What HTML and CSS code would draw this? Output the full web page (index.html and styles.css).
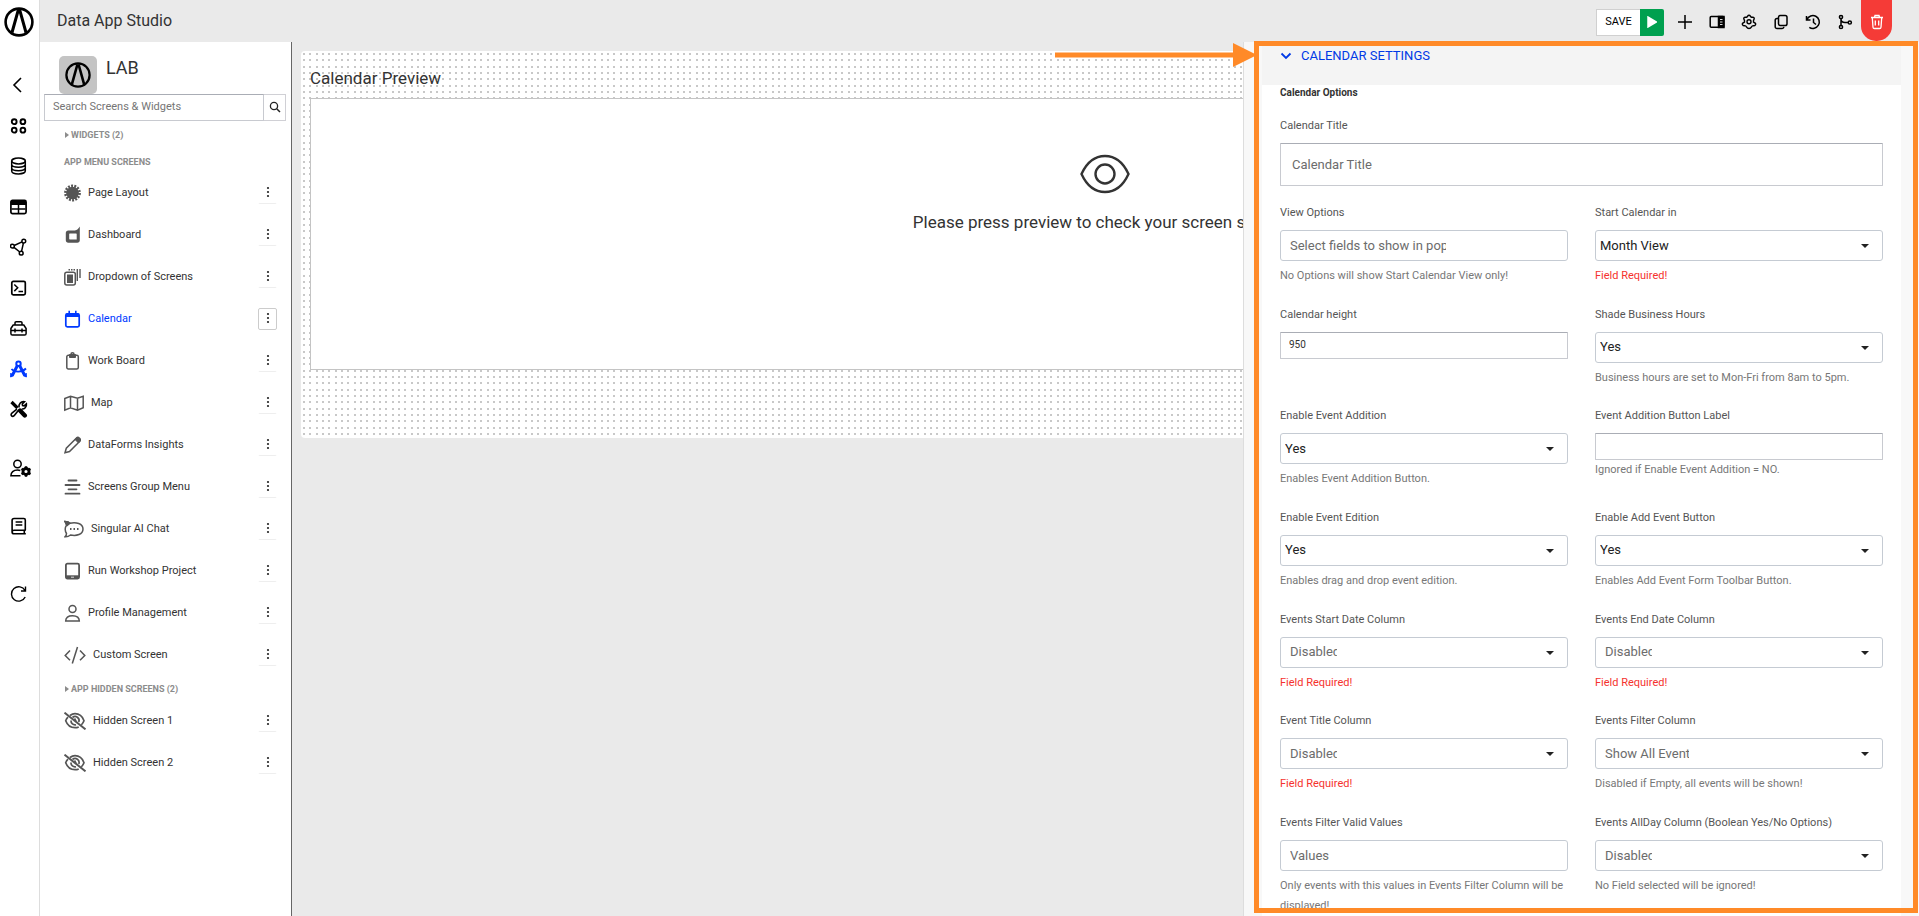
FILE: index.html
```html
<!DOCTYPE html>
<html lang="en">
<head>
<meta charset="utf-8">
<title>Data App Studio</title>
<link rel="stylesheet" href="styles.css">
</head>
<body>
<svg class="defs" aria-hidden="true">
  <symbol id="logo" viewBox="0 0 30 30"><circle cx="15" cy="15" r="13.4" fill="none" stroke="#000" stroke-width="2.6"/><path d="M8 25.500 14 4h2l6 21.500M15 5" fill="none" stroke="#000" stroke-width="3"/></symbol>
  <symbol id="kebab" viewBox="0 0 4 12"><circle cx="2" cy="2" r="1.100"/><circle cx="2" cy="6" r="1.100"/><circle cx="2" cy="10" r="1.100"/></symbol>
  <symbol id="eye-off" viewBox="0 0 22 18"><g fill="none" stroke="currentColor" stroke-width="1.700"><path d="M6 3.500C8 2 9.500 1.700 11 1.700c4.500 0 7.500 3 9 7-.6 1.600-1.500 3-2.700 4.100M4 5.200C3 6.200 2.200 7.400 1.700 8.700c1.500 4 4.800 7 9.300 7 1.300 0 2.600-.3 3.700-.8"/><path d="M8.500 5.500a4 4 0 0 1 6.300 4.500M7 8.500a4 4 0 0 0 5 4.200"/><path d="M10.500 6.500 12 9.500"/><path d="M.5.700 21.500 17.300" stroke-width="2"/></g></symbol>
</svg>
<div class="app">
  <aside class="rail">
    <a class="rail-logo" href="#" aria-label="Home"><svg width="30" height="30"><use href="#logo"/></svg></a>
    <nav class="rail-nav" aria-label="Main">
      <button class="rail-btn" aria-label="Back"><svg width="18" height="18" viewBox="0 0 18 18"><path d="m11 2-7 7 7 7" stroke-width="1.600"/></svg></button>
      <button class="rail-btn" aria-label="Apps"><svg width="18" height="18" viewBox="0 0 18 18"><g stroke-width="1.900"><circle cx="4.200" cy="4.700" r="2.400"/><circle cx="12.900" cy="4.700" r="2.400"/><circle cx="4.200" cy="13.200" r="2.400"/><circle cx="12.900" cy="13.200" r="2.400"/></g></svg></button>
      <button class="rail-btn" aria-label="Database"><svg width="18" height="18" viewBox="0 0 18 18"><ellipse cx="8.500" cy="4" rx="6.800" ry="2.900"/><path d="M1.700 4v10c0 1.600 3 2.900 6.800 2.900s6.800-1.300 6.800-2.900V4M1.700 7.500c0 1.500 2.800 2.700 6.800 2.700s6.800-1.200 6.800-2.700M1.700 11c0 1.500 2.800 2.700 6.800 2.700s6.800-1.200 6.800-2.700"/></svg></button>
      <button class="rail-btn" aria-label="Tables"><svg width="18" height="18" viewBox="0 0 18 18"><rect x=".9" y="2.400" width="15.200" height="13.200" rx="1.600" stroke-width="1.700"/><path d="M1 5h15" stroke-width="4"/><path d="M8.500 6v10M1.500 11h14"/></svg></button>
      <button class="rail-btn" aria-label="Flows"><svg width="18" height="18" viewBox="0 0 18 18"><circle cx="2.400" cy="8.200" r="1.900"/><circle cx="13.800" cy="3.200" r="1.900"/><circle cx="11.200" cy="15.200" r="1.900"/><path d="m4.200 7.500 7.800-3.600M4 9.300l5.800 4.700M13.400 5.200l-1.800 8"/></svg></button>
      <button class="rail-btn" aria-label="Console"><svg width="18" height="18" viewBox="0 0 18 18"><rect x="1.800" y="2.300" width="13.500" height="13.500" rx="1.500" stroke-width="1.700"/><path d="m4.300 5.500 3.400 3.300-3.400 3.300M8.500 12.500H13"/></svg></button>
      <button class="rail-btn" aria-label="Toolbox"><svg width="18" height="18" viewBox="0 0 18 18"><path d="M.9 9.500 3.200 6h10.600l2.300 3.500v5c0 1-.6 1.600-1.500 1.600H2.400c-.9 0-1.500-.6-1.500-1.600zM5 6V3.800c0-.7.400-1.100 1.100-1.100h4.800c.7 0 1.100.4 1.100 1.100V6M.9 11.500h15.200M5 9.500v4M12 9.500v4"/></svg></button>
      <button class="rail-btn rail-btn--active" aria-label="Studio"><svg width="18" height="18" viewBox="0 0 18 18"><circle cx="8.500" cy="3.700" r="2.200" stroke-width="2"/><path d="M7.200 6 2.500 15M9.800 6l4.700 9" stroke-width="3"/><path d="M1.500 9c2.500 3 10 4 14.500-.5" stroke-width="1.800"/><path d="m.8 13-.2 4L4 15.500M16.200 13l.2 4-3.400-1.500" fill="currentColor" stroke-width="1"/></svg></button>
      <button class="rail-btn" aria-label="Tools"><svg width="18" height="18" viewBox="0 0 18 18"><path d="M1.500 2l6 6" stroke-width="3.200"/><path d="m10 10.500 4.800 5" stroke-width="4.400" stroke-linecap="round"/><path d="M8.500 10.200 4.300 15.600c-.8 1-2 1-2.700.3s-.7-1.900.3-2.700l5-4M9 7.500C8.500 4 11 1 14.500 1.700L12.300 4l.3 1.600 1.600.3L16.400 3.800c.5 3.200-2 5.600-4.700 5.200" stroke-width="1.600"/></svg></button>
    </nav>
    <button class="rail-btn rail-btn--users" aria-label="User settings"><svg width="22" height="18" viewBox="0 0 22 18"><circle cx="7.500" cy="5" r="3.700"/><path d="M10.500 16.700H.9c0-3.300 2.500-5.700 6.600-5.700 1 0 2 .2 2.800.5"/><circle cx="16" cy="12.500" r="3" stroke-width="2.800"/><path d="M16 7.300v2M16 15.700v2M11.500 9.900l1.700 1M18.700 14.100l1.800 1M11.500 15.100l1.700-1M18.700 10.900l1.800-1" stroke-width="2.400"/></svg></button>
    <button class="rail-btn rail-btn--docs" aria-label="Documentation"><svg width="18" height="18" viewBox="0 0 18 18"><path d="M15.800 13.200H4.100c-1.200 0-2 .8-2 1.800s.8 1.800 2 1.800h11.700M2.100 15V3.500c0-1.200.8-2 2-2h9.700c1 0 1.500.5 1.500 1.500v10M14.300 13.500v3M5.600 5h6.700M5.600 8h6.700" stroke-width="1.600"/></svg></button>
    <button class="rail-btn rail-btn--refresh" aria-label="Refresh"><svg width="18" height="18" viewBox="0 0 18 18"><path d="M15 5.500A7.200 7.200 0 1 0 15.200 12M15.500 1.500V6H11" stroke-width="1.400"/></svg></button>
  </aside>

  <div class="shell">
    <header class="topbar">
      <h1 class="topbar-title">Data App Studio</h1>
      <div class="topbar-tools">
        <button class="save-btn">SAVE</button>
        <button class="play-btn" aria-label="Preview"><svg width="10" height="12" viewBox="0 0 10 12"><path d="M1 1v10l8.500-5z" fill="#fff" stroke="#fff"/></svg></button>
        <button class="tool-btn" aria-label="Add"><svg width="16" height="16" viewBox="0 0 16 16"><path d="M8 1v14M1 8h14" stroke-width="1.500"/></svg></button>
        <button class="tool-btn" aria-label="Panel"><svg width="16" height="16" viewBox="0 0 16 16"><rect x="1.200" y="2.500" width="13.600" height="10.800" rx="1"/><path d="M9.500 2.500H15v11H9.500z" fill="#000"/><path d="M11 5.500h2.500M11 8h2.500M11 10.500h2.500" stroke="#ddd" stroke-width="1"/></svg></button>
        <button class="tool-btn" aria-label="Settings"><svg width="16" height="16" viewBox="0 0 16 16"><path d="M8 1.200c1.300 0 1.500 1.500 2.200 1.900.8.400 2.200-.4 2.900.7.700 1.200-.6 2-.6 2.900 0 1 0 .6 0 1.300l2 1.300c.3.400.3.900 0 1.400-.7 1.700-2.500.8-3.300 1.300-.8.500-.9 2.500-3.200 2.500s-2.400-2-3.200-2.500c-.8-.5-2.600.4-3.300-1.300-.3-.500-.3-1 0-1.400l2-1.300V6.700c0-.900-1.300-1.700-.6-2.900.7-1.100 2.100-.3 2.900-.7.700-.4.900-1.900 2.200-1.900z" stroke-width="1.400"/><circle cx="8" cy="7.800" r="2" stroke-width="1.400"/></svg></button>
        <button class="tool-btn" aria-label="Copy"><svg width="16" height="16" viewBox="0 0 16 16"><rect x="5.500" y="1.500" width="8.500" height="10" rx="1.800"/><path d="M5 4.500H4A1.800 1.800 0 0 0 2.200 6.300v6.400A1.800 1.800 0 0 0 4 14.500h5a1.800 1.800 0 0 0 1.800-1.800"/></svg></button>
        <button class="tool-btn" aria-label="History"><svg width="16" height="16" viewBox="0 0 16 16"><path d="M1.500 2v4h4M2 5.500a6.400 6.400 0 1 1 2.300 7.800M8.500 4.500V8.500l2.500 2"/></svg></button>
        <button class="tool-btn" aria-label="Versions"><svg width="16" height="16" viewBox="0 0 16 16"><circle cx="4" cy="3" r="1.600"/><circle cx="4" cy="13" r="1.600"/><circle cx="12.800" cy="8.500" r="1.600"/><path d="M4 4.700v6.600M4 5c0 2.500 1.500 3.500 4 3.500h3"/></svg></button>
        <button class="delete-btn" aria-label="Delete"><svg width="14" height="16" viewBox="0 0 14 16"><path d="M1 3.500h12M4.500 3.500 5 1.500h4l.5 2M2.300 3.700l.7 9.500c.1.900.6 1.300 1.400 1.300h5.200c.8 0 1.300-.4 1.400-1.300l.7-9.500M5.300 6.500v5M8.700 6.500v5" stroke="#fff" stroke-width="1.300"/></svg></button>
      </div>
    </header>

    <div class="workspace">
      <aside class="sidebar">
        <div class="brand"><span class="brand-badge"><svg width="26" height="26"><use href="#logo"/></svg></span><span class="brand-name">LAB</span></div>
        <form class="search">
          <input class="search-input" type="text" placeholder="Search Screens &amp; Widgets" aria-label="Search Screens and Widgets">
          <button class="search-btn" type="button" aria-label="Search"><svg width="12" height="12" viewBox="0 0 12 12"><circle cx="5" cy="5" r="3.600" stroke-width="1.300"/><path d="m7.700 7.700 3.300 3.300"/></svg></button>
        </form>
        <button class="group group--widgets">WIDGETS (2)</button>
        <h2 class="group-title">APP MENU SCREENS</h2>
        <ul class="screens">
          <li class="screen"><a class="screen-link" href="#"><svg width="17" height="18" viewBox="0 0 17 18"><circle cx="8.500" cy="9" r="6.300" fill="currentColor" stroke="none"/><circle cx="8.500" cy="9" r="7" stroke-width="2.800" stroke-dasharray="1.900 1.240"/></svg>Page Layout</a><button class="kebab" aria-label="Page Layout menu"><svg width="4" height="12"><use href="#kebab"/></svg></button></li>
          <li class="screen"><a class="screen-link" href="#"><svg width="17" height="18" viewBox="0 0 17 18"><path d="M15.800.4v13.900c0 1.500-1 2.500-2.500 2.500H4.300c-1.500 0-2.500-1-2.500-2.500V7c0-1.500 1-2.500 2.500-2.500h6.500C13.300 4 14.300 2.500 15.800.4zM5.200 8v4.500c0 .7.400 1 1 1h6.500V8c0-.4-.2-.6-.6-.6H5.800c-.4 0-.6.2-.6.600z" fill="currentColor" fill-rule="evenodd" stroke="none"/></svg>Dashboard</a><button class="kebab" aria-label="Dashboard menu"><svg width="4" height="12"><use href="#kebab"/></svg></button></li>
          <li class="screen"><a class="screen-link" href="#"><svg width="17" height="18" viewBox="0 0 17 18"><rect x=".8" y="4.300" width="10.500" height="12.700" rx="2" stroke-width="1.500"/><path d="M3 6.500h6v8.500H3z" fill="currentColor" stroke="none"/><path d="M4.500 1.700H12" stroke-dasharray="1.500 1"/><path d="M13.300 1v12M16 1v9" stroke-width="1.400"/></svg>Dropdown of Screens</a><button class="kebab" aria-label="Dropdown of Screens menu"><svg width="4" height="12"><use href="#kebab"/></svg></button></li>
          <li class="screen screen--active"><a class="screen-link" href="#"><svg width="17" height="18" viewBox="0 0 17 18"><rect x="1.800" y="3.800" width="13.400" height="13" rx="1.500" stroke-width="1.700"/><path d="M2 5.200h13" stroke-width="3.600"/><path d="M5.200.8v3M11.800.8v3" stroke-width="1.600"/></svg>Calendar</a><button class="kebab" aria-label="Calendar menu"><svg width="4" height="12"><use href="#kebab"/></svg></button></li>
          <li class="screen"><a class="screen-link" href="#"><svg width="17" height="18" viewBox="0 0 17 18"><rect x="2.800" y="3.300" width="11.500" height="13.700" rx="1.500"/><path d="M5.500 2.500h6v3h-6z" fill="currentColor" stroke-width="1"/><circle cx="8.500" cy="2.300" r="1.500"/></svg>Work Board</a><button class="kebab" aria-label="Work Board menu"><svg width="4" height="12"><use href="#kebab"/></svg></button></li>
          <li class="screen"><a class="screen-link" href="#"><svg width="20" height="18" viewBox="0 0 20 18"><path d="M.8 4.500 6.500 2.300l7 2 5.700-2v11.500l-5.700 2.400-7-2.300L.8 16.200zM6.500 2.300v11.600M13.500 4.300v11.900"/></svg>Map</a><button class="kebab" aria-label="Map menu"><svg width="4" height="12"><use href="#kebab"/></svg></button></li>
          <li class="screen"><a class="screen-link" href="#"><svg width="17" height="18" viewBox="0 0 17 18"><path d="m1 16.800 1.300-4.600L12.500 2c.8-.8 1.900-.8 2.700 0l.6.600c.8.800.8 1.900 0 2.700L5.500 15.500z"/><path d="m11 3.500 3.500 3.500 2-2.500L13.500 1z" fill="currentColor" stroke-width="1"/></svg>DataForms Insights</a><button class="kebab" aria-label="DataForms Insights menu"><svg width="4" height="12"><use href="#kebab"/></svg></button></li>
          <li class="screen"><a class="screen-link" href="#"><svg width="17" height="18" viewBox="0 0 17 18"><path d="M4.500 2.500h8M1.500 7h14M4.500 11.300h8M1.500 15.700h14" stroke-width="1.800" stroke-linecap="round"/></svg>Screens Group Menu</a><button class="kebab" aria-label="Screens Group Menu menu"><svg width="4" height="12"><use href="#kebab"/></svg></button></li>
          <li class="screen"><a class="screen-link" href="#"><svg width="20" height="18" viewBox="0 0 20 18"><path d="M.8 1.500c2 0 4 .5 5 1.700C12 1.700 19 3.500 19 9s-6.500 7.300-12.500 6c-1.500 1.200-3.500 2-5.500 1.800 1-1 1.500-2 1.500-3.300-1.500-2.500-1.500-6 0-8.300C2.500 3.500 2 2.300.8 1.500z"/><path d="M1 1.500c2 0 4 .5 5 1.700L3 5.500z" fill="currentColor"/><path d="M6 9h1.500M9.500 9H11M13 9h1.500" stroke-width="1.900"/></svg>Singular AI Chat</a><button class="kebab" aria-label="Singular AI Chat menu"><svg width="4" height="12"><use href="#kebab"/></svg></button></li>
          <li class="screen"><a class="screen-link" href="#"><svg width="17" height="18" viewBox="0 0 17 18"><rect x="1.900" y="1.700" width="13.200" height="14.800" rx="1.500" stroke-width="1.800"/><path d="M2 15h13" stroke-width="3.400"/><path d="M7 15.200h3" stroke="#ddd" stroke-width="1"/></svg>Run Workshop Project</a><button class="kebab" aria-label="Run Workshop Project menu"><svg width="4" height="12"><use href="#kebab"/></svg></button></li>
          <li class="screen"><a class="screen-link" href="#"><svg width="17" height="18" viewBox="0 0 17 18"><circle cx="8.500" cy="5" r="3.500"/><path d="M1.700 17c0-3.500 2.300-5.300 6.800-5.300s6.800 1.800 6.800 5.300z"/></svg>Profile Management</a><button class="kebab" aria-label="Profile Management menu"><svg width="4" height="12"><use href="#kebab"/></svg></button></li>
          <li class="screen"><a class="screen-link" href="#"><svg width="22" height="18" viewBox="0 0 22 18"><path d="M6 4.500 1.200 9.500 6 14.300M16 4.500l4.800 5L16 14.300M13.500 1 8.300 17.500"/></svg>Custom Screen</a><button class="kebab" aria-label="Custom Screen menu"><svg width="4" height="12"><use href="#kebab"/></svg></button></li>
        </ul>
        <button class="group group--hidden">APP HIDDEN SCREENS (2)</button>
        <ul class="screens">
          <li class="screen"><a class="screen-link" href="#"><svg width="22" height="18"><use href="#eye-off"/></svg>Hidden Screen 1</a><button class="kebab" aria-label="Hidden Screen 1 menu"><svg width="4" height="12"><use href="#kebab"/></svg></button></li>
          <li class="screen"><a class="screen-link" href="#"><svg width="22" height="18"><use href="#eye-off"/></svg>Hidden Screen 2</a><button class="kebab" aria-label="Hidden Screen 2 menu"><svg width="4" height="12"><use href="#kebab"/></svg></button></li>
        </ul>
      </aside>

      <main class="stage">
        <section class="preview">
          <h2 class="preview-title">Calendar Preview</h2>
          <div class="preview-card">
            <svg width="50" height="40" viewBox="0 0 50 40"><path d="M1.500 20C7 8 15 2 25 2s18 6 23.500 18C43 32 35 38 25 38S7 32 1.500 20z" stroke-width="2.400"/><circle cx="25" cy="20" r="9.500" stroke-width="2.400"/></svg>
            <p class="preview-text">Please press preview to check your screen settings</p>
          </div>
        </section>

        <section class="settings">
          <div class="settings-inner">
            <button class="settings-head"><svg width="12" height="8" viewBox="0 0 12 8"><path d="m1.500 1.500 4.500 4.500 4.500-4.500" stroke="#0039e6" stroke-width="1.800"/></svg>CALENDAR SETTINGS</button>
            <form class="settings-body">
              <h3 class="options-title">Calendar Options</h3>
              <div class="field">
                <label class="label" for="title">Calendar Title</label>
                <input class="text-input text-input--tall" id="title" type="text" placeholder="Calendar Title">
              </div>
              <div class="fields fields--main">
                <div class="field"><label class="label" for="views">View Options</label><div class="box"><input class="combo combo--views" id="views" type="text" placeholder="Select fields to show in popup"></div><p class="help">No Options will show Start Calendar View only!</p></div>
                <div class="field"><label class="label" for="start">Start Calendar in</label><div class="box box--caret"><select class="select" id="start"><option>Month View</option></select></div><p class="help help--error">Field Required!</p></div>
                <div class="field"><label class="label" for="height">Calendar height</label><input class="text-input" id="height" type="text" value="950"></div>
                <div class="field"><label class="label" for="shade">Shade Business Hours</label><div class="box box--caret"><select class="select" id="shade"><option>Yes</option></select></div><p class="help">Business hours are set to Mon-Fri from 8am to 5pm.</p></div>
                <div class="field"><label class="label" for="addition">Enable Event Addition</label><div class="box box--caret"><select class="select" id="addition"><option>Yes</option></select></div><p class="help">Enables Event Addition Button.</p></div>
                <div class="field"><label class="label" for="addlabel">Event Addition Button Label</label><input class="text-input" id="addlabel" type="text"><p class="help help--near">Ignored if Enable Event Addition = NO.</p></div>
                <div class="field"><label class="label" for="edition">Enable Event Edition</label><div class="box box--caret"><select class="select" id="edition"><option>Yes</option></select></div><p class="help">Enables drag and drop event edition.</p></div>
                <div class="field"><label class="label" for="addbtn">Enable Add Event Button</label><div class="box box--caret"><select class="select" id="addbtn"><option>Yes</option></select></div><p class="help">Enables Add Event Form Toolbar Button.</p></div>
                <div class="field"><label class="label" for="sdate">Events Start Date Column</label><div class="box box--caret"><input class="combo" id="sdate" type="text" placeholder="Disabled"></div><p class="help help--error">Field Required!</p></div>
                <div class="field"><label class="label" for="edate">Events End Date Column</label><div class="box box--caret"><input class="combo" id="edate" type="text" placeholder="Disabled"></div><p class="help help--error">Field Required!</p></div>
                <div class="field"><label class="label" for="etitle">Event Title Column</label><div class="box box--caret"><input class="combo" id="etitle" type="text" placeholder="Disabled"></div><p class="help help--error">Field Required!</p></div>
                <div class="field"><label class="label" for="efilter">Events Filter Column</label><div class="box box--caret"><input class="combo combo--filter" id="efilter" type="text" placeholder="Show All Events"></div><p class="help">Disabled if Empty, all events will be shown!</p></div>
              </div>
              <div class="fields">
                <div class="field"><label class="label" for="valid">Events Filter Valid Values</label><div class="box"><input class="combo" id="valid" type="text" placeholder="Values"></div><p class="help">Only events with this values in Events Filter Column will be displayed!</p></div>
                <div class="field"><label class="label" for="allday">Events AllDay Column (Boolean Yes/No Options)</label><div class="box box--caret"><input class="combo" id="allday" type="text" placeholder="Disabled"></div><p class="help">No Field selected will be ignored!</p></div>
              </div>
            </form>
          </div>
        </section>
        <div class="highlight"></div>
        <svg class="arrow" width="204" height="26" viewBox="0 0 204 26"><path d="M0 13h184" stroke="#ff8a28" stroke-width="5"/><path d="M178 1v24l24-12z" fill="#ff8a28" stroke="none"/></svg>
      </main>
    </div>
  </div>
</div>
</body>
</html>
```
FILE: styles.css
```css
* { box-sizing: border-box; }
body { margin: 0; background: #eaeaea; color: #333; font: 11px/16px Roboto, "Liberation Sans", sans-serif; }
h1, h2, h3, p, ul { margin: 0; padding: 0; font-weight: 400; }
ul { list-style: none; }
button, input, select { font: inherit; color: inherit; }
button { padding: 0; border: 0; background: none; cursor: pointer; }
a { color: inherit; text-decoration: none; }
svg { flex: none; fill: none; stroke: currentColor; stroke-width: 1.5; }
.defs { display: none; }

.app { display: flex; height: 100vh; overflow: hidden; }
.shell { flex: 1; min-width: 0; display: flex; flex-direction: column; }

/* Icon rail */
.rail { width: 40px; background: #fff; border-right: 1px solid #ddd; display: flex; flex-direction: column; color: #000; }
.rail-logo { padding: 7px 4px 28px; height: 65px; }
.rail-nav { display: flex; flex-direction: column; justify-content: space-between; min-height: 364px; }
.rail-btn { height: 40px; padding-left: 10px; display: flex; align-items: center; }
.rail-btn--active { color: #0039ff; }
.rail-btn--users { margin-top: 19px; }
.rail-btn--docs { margin-top: 18px; }
.rail-btn--refresh { margin-top: 28px; }

/* Top bar */
.topbar { height: 42px; display: flex; align-items: center; justify-content: space-between; padding: 0 27px 0 17px; background: #eaeaea; }
.topbar-title { font-size: 16px; line-height: 20px; }
.topbar-tools { display: flex; align-items: center; height: 42px; padding-top: 2px; color: #000; }
.save-btn { width: 44px; height: 27px; background: #fff; border: 1px solid #d0d0d0; border-right: 0; }
.play-btn { width: 24px; height: 27px; margin-right: 5px; background: #00a04f; border-radius: 0 2px 2px 0; display: grid; place-items: center; }
.tool-btn { width: 32px; height: 32px; display: grid; place-items: center; }
.delete-btn { width: 31px; height: 41px; margin-top: -2px; padding-top: 3px; align-self: flex-start; background: #f53b37; border-radius: 0 0 15px 15px; display: grid; place-items: center; }

.workspace { flex: 1; min-height: 0; display: flex; }

/* Sidebar */
.sidebar { width: 252px; background: #fff; border-right: 1px solid #666; padding: 14px 5px 0 4px; }
.brand { display: flex; gap: 9px; padding-left: 15px; }
.brand-badge { width: 38px; height: 38px; border-radius: 5px; background: #c4c4c4; display: grid; place-items: center; }
.brand-name { font-size: 18px; line-height: 24px; }
.search { display: flex; height: 27px; }
.search-input { flex: 1; min-width: 0; padding: 0 8px 2px; border: 1px solid #c8cad0; border-top-color: #aaadb5; background: #fff; }
.search-input::placeholder { color: #757575; opacity: 1; }
.search-btn { width: 22px; padding-bottom: 2px; border: 1px solid #d0d0d5; border-left: 0; display: grid; place-items: center; color: #222; }
.group, .group-title { color: #8c8c8c; font-size: 9px; line-height: 14px; font-weight: 700; }
.group { display: flex; align-items: center; gap: 2px; padding-left: 21px; }
.group::before { content: ""; border-left: 4px solid #8c8c8c; border-top: 3px solid transparent; border-bottom: 3px solid transparent; }
.group--widgets { margin-top: 7px; }
.group--hidden { margin: 6px 0 4px; }
.group-title { margin: 13px 0 3px; padding-left: 20px; }
.screen { display: flex; align-items: center; justify-content: space-between; height: 42px; padding: 0 9px 0 20px; }
.screen-link { display: flex; align-items: center; gap: 7px; }
.screen-link svg { color: #555; }
.screen--active .screen-link, .screen--active .screen-link svg { color: #0039ff; }
.kebab { width: 19px; height: 22px; padding-bottom: 2px; border: 1px solid transparent; border-bottom-color: #eee; border-radius: 2px; display: grid; place-items: center; }
.kebab svg { fill: #222; stroke: none; }
.screen--active .kebab { border-color: #ccc; }

/* Preview canvas */
.stage { position: relative; flex: 1; min-width: 0; padding: 9px; }
.preview {
  --dot: #c8c8c8 0, #c8c8c8 1px, transparent 1px;
  padding: 15px 10px 68px 9px;
  border-radius: 4px;
  background-color: #fff;
  background-size: 19px 19px;
  background-image:
    radial-gradient(circle at 3px 3px, var(--dot)), radial-gradient(circle at 9px 3px, var(--dot)), radial-gradient(circle at 16px 3px, var(--dot)),
    radial-gradient(circle at 3px 9px, var(--dot)), radial-gradient(circle at 9px 9px, var(--dot)), radial-gradient(circle at 16px 9px, var(--dot)),
    radial-gradient(circle at 3px 16px, var(--dot)), radial-gradient(circle at 9px 16px, var(--dot)), radial-gradient(circle at 16px 16px, var(--dot));
}
.preview-title { font-size: 17px; line-height: 24px; padding-bottom: 8px; }
.preview-card { height: 272px; padding-top: 55px; background: #fff; border: 1px solid #c4c4c4; text-align: center; }
.preview-card svg { display: block; margin: 0 auto 16px; }
.preview-text { font-size: 17px; line-height: 24px; }

/* Settings panel, docked over the canvas */
.settings { position: absolute; top: 0; right: 0; bottom: 0; width: 676px; padding: 0 18px; background: #f8f8f8; border-left: 1px solid #ddd; overflow: hidden; }
.settings-inner { background: #fff; min-height: 100%; }
.settings-head { width: 100%; height: 43px; padding: 0 18px 16px; display: flex; align-items: center; gap: 9px; background: #f4f4f4; color: #0039e6; font-size: 13px; }
.settings-body { padding: 0 18px; }
.options-title { font-size: 10px; font-weight: 700; padding-bottom: 17px; }
.field { display: flex; flex-direction: column; align-items: stretch; }
.label { color: #555; padding-bottom: 9px; }
.text-input { height: 27px; padding: 0 8px 2px; border: 1px solid #c8cad0; border-top-color: #aaadb5; border-radius: 1px; background: #fff; font-size: 10px; }
.text-input--tall { height: 43px; padding: 0 11px; margin-bottom: 19px; font-size: 13px; }
.text-input--tall::placeholder, .combo::placeholder { color: #6c6c6c; opacity: 1; }
.fields { display: grid; grid-template-columns: 1fr 1fr; column-gap: 27px; }
.fields--main { min-height: 610px; grid-auto-rows: 1fr; }
.box { position: relative; display: flex; height: 31px; border: 1px solid #c5cbd3; border-radius: 3px; background: #fff; font-size: 13px; }
.box--caret::after { content: ""; position: absolute; right: 13px; top: 13px; border: 4px solid transparent; border-top-color: #222; border-bottom: 0; pointer-events: none; }
.select { width: 100%; padding: 0 4px; border: 0; background: none; appearance: none; color: #222; }
.combo { width: 47px; margin-left: 9px; padding: 0; border: 0; background: none; }
.combo--views { width: 156px; }
.combo--filter { width: 84px; }
.help { color: #777; padding-top: 5px; line-height: 20px; }
.help--near { padding-top: 0; }
.help--error { color: #f5322e; }

/* Callout */
.highlight { position: absolute; top: -1px; right: 1px; bottom: 3px; width: 664px; border: 5px solid #ff8a28; pointer-events: none; }
.arrow { position: absolute; top: 0; right: 660px; pointer-events: none; }
```
